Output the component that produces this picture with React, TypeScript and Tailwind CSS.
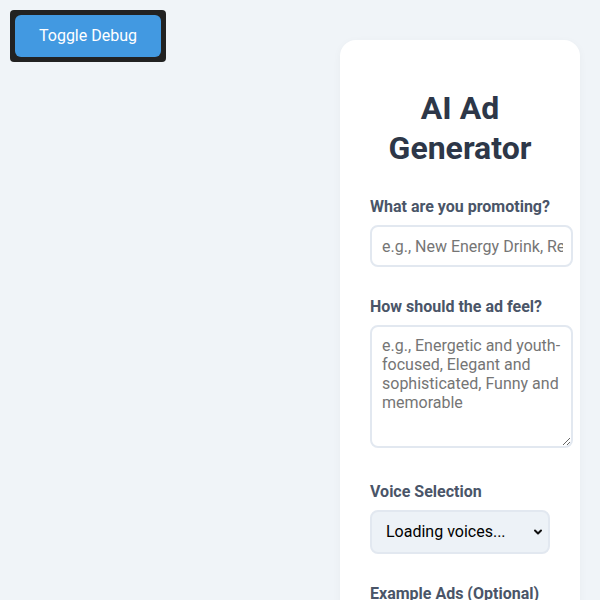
const font = { fontFamily: "Roboto, 'Liberation Sans', sans-serif" };

export default function App() {
  return (
    <div className="min-h-screen bg-[#f0f4f8] flex items-start" style={font}>
      <div className="p-[10px] shrink-0">
        <div className="bg-[#222] rounded-[4px] p-[5px]">
          <button className="bg-[#4299e1] text-white text-[16px] rounded-[6px] w-[146px] h-[42px]">
            Toggle Debug
          </button>
        </div>
      </div>

      <div className="ml-auto mr-5 mt-10 w-[240px] bg-white rounded-2xl shadow-[0_2px_8px_rgba(0,0,0,0.04)] px-[30px] pt-[30px] pb-10">
        <h1 className="mt-[18px] text-[32px] leading-10 font-bold text-[#2d3748] text-center">
          AI Ad Generator
        </h1>

        <div className="mt-[29px]">
          <label className="block text-[16px] leading-5 font-bold text-[#4a5568] mb-[8px]">
            What are you promoting?
          </label>
          <input
            type="text"
            placeholder="e.g., New Energy Drink, Restaurant Opening"
            className="block w-[203px] h-[42px] pl-[10px] pr-[8px] border-2 border-[#e2e8f0] rounded-lg text-[16px] text-[#2d3748] placeholder:text-[#757575] bg-white outline-none"
          />
        </div>

        <div className="mt-[30px]">
          <label className="block text-[16px] leading-5 font-bold text-[#4a5568] mb-[8px]">
            How should the ad feel?
          </label>
          <textarea
            rows={4}
            placeholder="e.g., Energetic and youth-focused, Elegant and sophisticated, Funny and memorable"
            className="block w-[203px] h-[123px] pl-[10px] pr-[6px] pt-[9px] pb-[10px] border-2 border-[#e2e8f0] rounded-lg text-[16px] leading-[19px] text-[#2d3748] placeholder:text-[#757575] bg-white outline-none resize-y"
          />
        </div>

        <div className="mt-[34px]">
          <label className="block text-[16px] leading-5 font-bold text-[#4a5568] mb-[8px]">
            Voice Selection
          </label>
          <div className="relative w-[180px]">
            <select className="appearance-none block w-full h-[44px] pl-[14px] pr-8 border-2 border-[#e2e8f0] rounded-lg bg-[#edf2f7] text-[16px] text-black outline-none">
              <option>Loading voices...</option>
            </select>
            <svg
              className="absolute right-[7px] top-1/2 -translate-y-1/2 pointer-events-none"
              width="10"
              height="10"
              viewBox="0 0 10 10"
              fill="none"
              stroke="#111"
              strokeWidth="2"
              strokeLinecap="round"
              strokeLinejoin="round"
            >
              <path d="M2 3.5 5 6.5 8 3.5" />
            </svg>
          </div>
        </div>

        <div className="mt-[30px]">
          <label className="block text-[16px] leading-5 font-bold text-[#4a5568] mb-[8px]">
            Example Ads (Optional)
          </label>
          <textarea
            rows={4}
            className="block w-[203px] h-[123px] px-[10px] py-[9px] border-2 border-[#e2e8f0] rounded-lg text-[16px] bg-white outline-none"
          />
        </div>
      </div>
    </div>
  );
}
